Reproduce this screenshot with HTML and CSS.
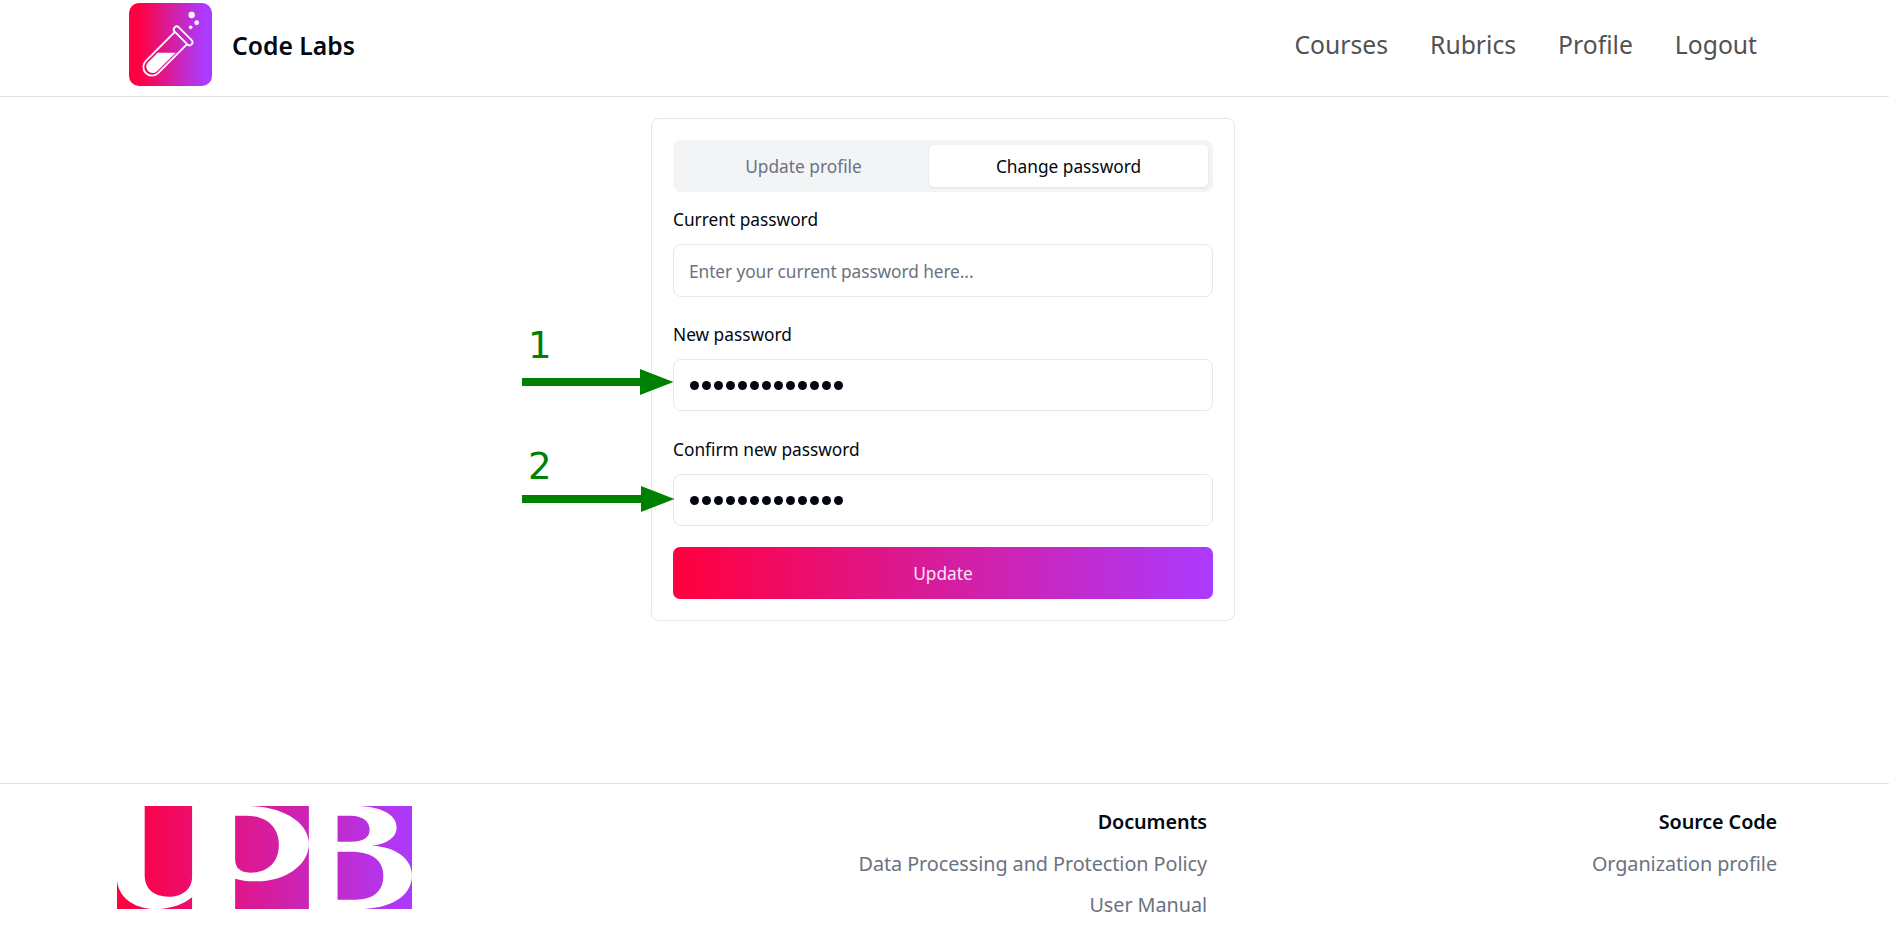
FILE: index.html
```html
<!DOCTYPE html>
<html lang="en">
<head>
<meta charset="utf-8">
<title>Code Labs</title>
<link rel="stylesheet" href="styles.css">
</head>
<body>
<header class="header">
  <a class="brand">
    <svg class="brand-icon" viewBox="0 0 249 249">
      <defs>
        <linearGradient id="brandFill" x1="0" x2="1" y1="0" y2="0">
          <stop offset="0.12" stop-color="#ff0040"/>
          <stop offset="0.9" stop-color="#ac3aff"/>
        </linearGradient>
      </defs>
      <rect width="249" height="249" rx="30" fill="url(#brandFill)"/>
      <g fill="#fff">
        <circle cx="188" cy="36" r="9.5"/>
        <circle cx="203" cy="59" r="7"/>
        <circle cx="185" cy="73" r="5.5"/>
        <path d="M86 149H140L83.400 205.400A19 19 0 0 1 56.600 178.600Z"/>
      </g>
      <g transform="translate(69 192) rotate(45)" fill="none" stroke="#fff" stroke-width="5.500">
        <path d="M-26 -122V0A26 26 0 0 0 26 0V-122"/>
        <rect x="-36" y="-141" width="72" height="18" rx="9"/>
      </g>
    </svg>
    <span class="brand-name">Code Labs</span>
  </a>
  <nav class="nav"><a>Courses</a><a>Rubrics</a><a>Profile</a><a>Logout</a></nav>
</header>

<main class="main">
  <section class="card">
    <div class="tabs">
      <button class="tab">Update profile</button>
      <button class="tab tab-active">Change password</button>
    </div>
    <form class="form">
      <div class="field">
        <label class="label">Current password</label>
        <div class="input placeholder">Enter your current password here...</div>
      </div>
      <div class="field">
        <label class="label">New password</label>
        <div class="input"><span class="dots"><i></i><i></i><i></i><i></i><i></i><i></i><i></i><i></i><i></i><i></i><i></i><i></i><i></i></span></div>
      </div>
      <div class="field">
        <label class="label">Confirm new password</label>
        <div class="input"><span class="dots"><i></i><i></i><i></i><i></i><i></i><i></i><i></i><i></i><i></i><i></i><i></i><i></i><i></i></span></div>
      </div>
      <button class="submit" type="button">Update</button>
    </form>
  </section>
</main>

<footer class="footer">
  <svg class="footer-logo" viewBox="0 0 884 309" preserveAspectRatio="none">
    <defs>
      <linearGradient id="footerFill" gradientUnits="userSpaceOnUse" x1="0" x2="884" y1="0" y2="0">
        <stop offset="0.03" stop-color="#ff0040"/>
        <stop offset="1" stop-color="#ac3aff"/>
      </linearGradient>
    </defs>
    <g fill="url(#footerFill)">
      <path d="M83 0H225V212C225 250 195 272 154 272C112 272 83 250 83 208Z"/>
      <path d="M0 223C5 275 50 307 108 309H0Z"/>
      <path d="M128 309C170 306 200 294 225 274V309Z"/>
      <path d="M354 29H385C450 29 485 65 485 117C485 170 450 200 400 200C368 200 354 185 354 160Z"/>
      <path d="M399 0H575V113C575 180 500 226 419 226C390 226 370 223 354 218V309H575V113C575 50 500 3 399 0Z"/>
      <path d="M661 29H700C735 29 757 45 757 72C757 95 738 107 700 107H661Z"/>
      <path d="M661 137H700C768 137 798 165 798 210C798 255 768 281 715 281H661Z"/>
      <path d="M724 0H884V208C884 158 835 123 765 119C810 113 838 95 838 63C838 30 800 3 724 0Z"/>
      <path d="M884 208V309H740C830 305 884 265 884 208Z"/>
    </g>
  </svg>
  <div class="footer-col footer-docs">
    <h2>Documents</h2>
    <a>Data Processing and Protection Policy</a>
    <a>User Manual</a>
  </div>
  <div class="footer-col footer-source">
    <h2>Source Code</h2>
    <a>Organization profile</a>
  </div>
</footer>

<svg class="annotations" viewBox="0 0 160 190">
  <g fill="#008000">
    <path d="M2 53H120V44L153.500 57L120 70V61H2Z"/>
    <path d="M2 170H121V161L154.500 174L121 187V178H2Z"/>
    <text x="8" y="33">1</text>
    <text x="8" y="154">2</text>
  </g>
</svg>
</body>
</html>
```
FILE: styles.css
```css
* { box-sizing: border-box; }

body {
  margin: 0;
  height: 936px;
  overflow: hidden;
  position: relative;
  display: flex;
  flex-direction: column;
  background: #fff;
  color: #030712;
  font-family: "Noto Sans", sans-serif;
  font-size: 17.3px;
}

.header {
  height: 97px;
  flex: none;
  padding: 3px 132px 10px 129px;
  display: flex;
  justify-content: space-between;
  align-items: center;
  border-bottom: 1px solid #e2e3e6;
}

.brand { display: flex; align-items: center; gap: 20px; }
.brand-icon { width: 83px; height: 83px; display: block; }
.brand-name { padding-top: 2px; font-size: 24.7px; font-weight: 600; }

.nav { display: flex; gap: 42px; font-size: 24.7px; color: #525252; }

.main { flex: 1; padding: 21px 0 0 651px; }

.card {
  width: 584px;
  height: 503px;
  padding: 21px;
  border: 1px solid #e5e7eb;
  border-radius: 8px;
}

.tabs {
  height: 52px;
  padding: 5px;
  display: flex;
  background: #f3f4f6;
  border-radius: 8px;
}

.tab {
  flex: 0 0 251px;
  border: 0;
  padding: 0;
  border-radius: 5px;
  background: none;
  color: #6b7280;
  font: inherit;
}

.tab-active {
  flex: 1;
  background: #fff;
  color: #030712;
  box-shadow: 0 1px 3px rgba(0, 0, 0, 0.08);
}

.form { padding-top: 15px; }
.field { height: 115px; }
.label { display: block; height: 37px; line-height: 25px; }

.input {
  height: 52px;
  padding: 0 16px;
  display: flex;
  align-items: center;
  border: 1px solid #e5e7eb;
  border-radius: 8px;
}

.input.placeholder {
  height: 53px;
  padding: 2px 15px 0;
  letter-spacing: -0.08px;
  color: #6b7280;
}

.dots { padding-top: 1px; display: flex; gap: 2.7px; }
.dots i { width: 9.3px; height: 9.3px; border-radius: 50%; background: #030712; }

.submit {
  display: block;
  width: 100%;
  height: 52px;
  margin-top: -5px;
  border: 0;
  border-radius: 7px;
  background: linear-gradient(90deg, #ff0040 2%, #ac3aff 100%);
  color: #f9e4f6;
  font: inherit;
}

.footer {
  height: 153px;
  flex: none;
  padding: 22px 112px 0 117px;
  display: flex;
  border-top: 1px solid #e2e3e6;
}

.footer-logo { width: 295px; height: 103px; margin-top: 0.4px; }

.footer-col {
  display: flex;
  flex-direction: column;
  align-items: flex-end;
  font-size: 19.8px;
  line-height: 27px;
  letter-spacing: -0.05px;
  color: #6b7280;
  white-space: nowrap;
}

.footer-docs { width: 795px; gap: 14px; }
.footer-source { flex: 1; gap: 14px; }

.footer-col h2 {
  margin: 2px 0 1px;
  font-size: 19.8px;
  line-height: 27px;
  letter-spacing: -0.1px;
  font-weight: 600;
  color: #030712;
}

.annotations {
  position: absolute;
  left: 520px;
  top: 325px;
  width: 160px;
  height: 190px;
  font-family: "DejaVu Sans", sans-serif;
  font-size: 37px;
}
```
